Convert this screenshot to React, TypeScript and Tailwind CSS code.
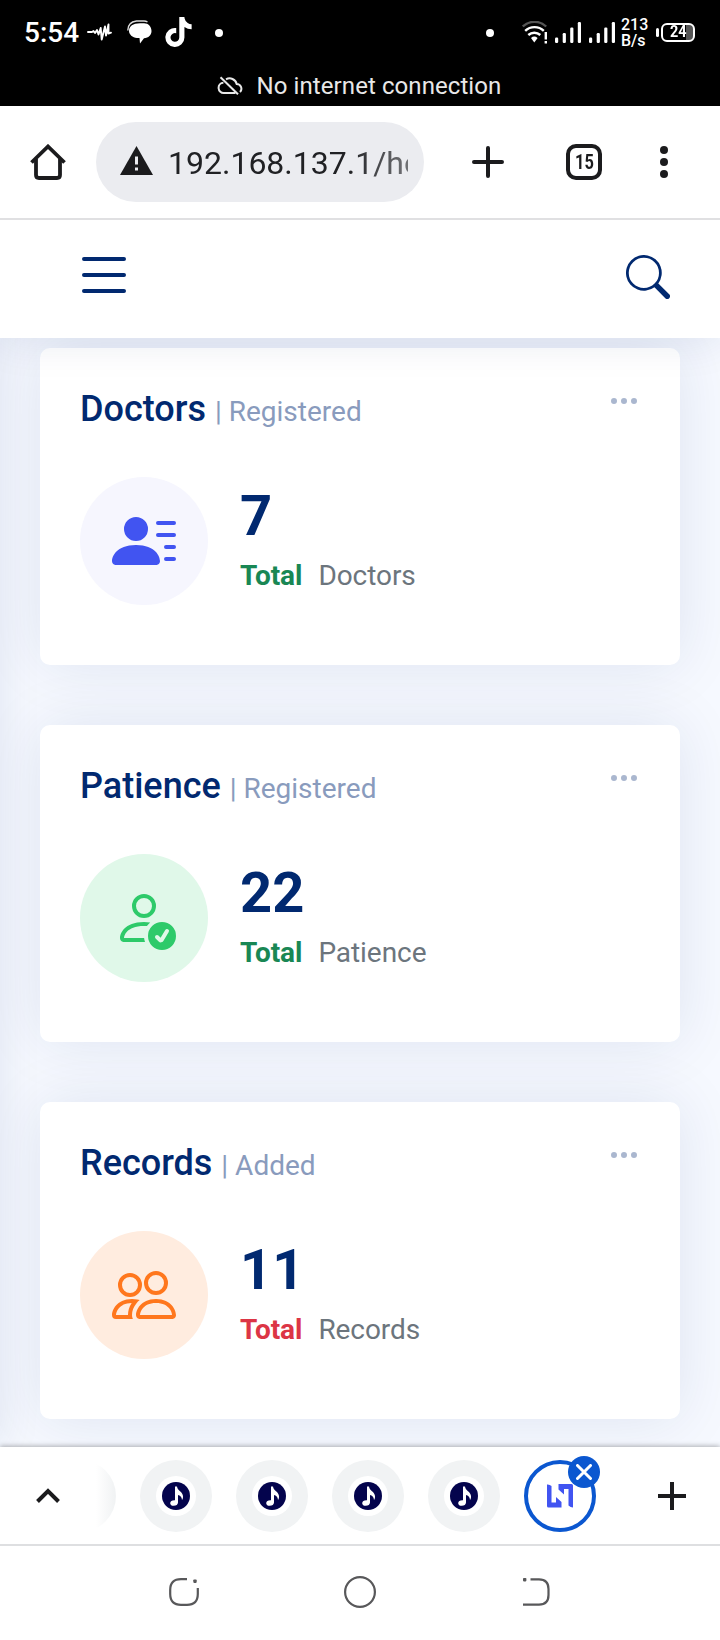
import type { ReactNode } from "react";
import {
  BsList,
  BsPeople,
  BsPersonCheck,
  BsPersonLinesFill,
  BsSearch,
  BsThreeDots,
} from "react-icons/bs";
import { FaTiktok } from "react-icons/fa6";

function SignalBars() {
  return (
    <svg width="26" height="21" viewBox="0 0 26 21" fill="#fff">
      <rect x="0" y="15.5" width="3.2" height="5.5" rx="1.2" />
      <rect x="7.7" y="11" width="3.2" height="10" rx="1.2" />
      <rect x="15.2" y="5.5" width="3.2" height="15.5" rx="1.2" />
      <rect x="22.8" y="0" width="3.2" height="21" rx="1.2" />
    </svg>
  );
}

function StatusBar() {
  return (
    <div className="h-[106px] bg-black text-white">
      <div className="flex h-16 items-center pl-[24px] pr-[25px]">
        <span className="w-[63px] pt-[2px] text-[28px] font-medium leading-8">5:54</span>
        <svg width="25" height="18" viewBox="0 0 25 18" fill="none" stroke="#fff" strokeWidth="1.900" strokeLinejoin="round" strokeLinecap="round">
          <path d="M1 9h4l1.500-1 1.500 2 2-3 1.500 4.500 2.200-6.500 1 11.500L18 3.500l1 9L21.500 1.500v9l2.500-.8" />
        </svg>
        <svg className="ml-[15px]" width="25" height="24" viewBox="0 0 25 24">
          <path d="M13 3.200h4c4.500 0 7.500 3.500 7.500 7.800 0 4-3 7-7.500 7.200L13 23.500 12.500 18H10c-4.500-.5-8-3.500-8-7 0-4.800 4-7.800 11-7.800Z" fill="#fff" />
          <path d="M.8 10.500Q.8 2 9.500 1H17q2 0 3.500 1" fill="none" stroke="#ddd" strokeWidth="1.400" />
        </svg>
        <FaTiktok className="ml-[12px] h-[30px] w-[29px]" />
        <span className="ml-[22px] mt-px size-2 rounded-full bg-white" />
        <span className="ml-auto mt-px size-2 rounded-full bg-white" />
        <svg className="ml-[28px]" width="26" height="23" viewBox="0 0 26 23" fill="none" stroke="#fff" strokeWidth="2.400">
          <path d="M.8 5.500a17 17 0 0 1 23.400 0" stroke="#555" />
          <path d="M3.200 9.800a13.500 13.500 0 0 1 18.600 0" />
          <path d="M6.300 14a9 9 0 0 1 12 0" />
          <path d="M9 17a5 5 0 0 1 6.600 0L12.300 21.500z" fill="#fff" stroke="none" />
          <path d="M23.800 11v7.500M23.800 20v2.500" />
        </svg>
        <span className="ml-[7px]"><SignalBars /></span>
        <span className="ml-[8px]"><SignalBars /></span>
        <div className="ml-[6px] mt-[2px] w-[28px] text-[16px] font-medium">
          <div className="leading-[16px]">213</div>
          <div className="leading-[16px]">B/s</div>
        </div>
        <span className="ml-[7px] h-[9px] w-[3px] rounded-sm bg-white" />
        <span className="ml-[2px] flex h-[19px] w-[34px] items-center justify-center rounded-[6px] border-2 border-white bg-[linear-gradient(90deg,#000_78%,#555_78%)] text-[16px] font-bold leading-none">
          <span className="scale-x-90">24</span>
        </span>
      </div>
      <div className="flex h-11 items-center justify-center pr-[2px]">
        <svg className="mr-[14px]" width="26" height="20" viewBox="0 0 26 20" fill="none" stroke="#e8e8e8" strokeWidth="2">
          <path d="M9 3.300A7.300 7.300 0 0 1 19.700 8a4.700 4.700 0 0 1 3.300 8M18.500 17H7a5 5 0 0 1-.6-10.200" />
          <path d="m3.500 1.200 17.500 17" />
        </svg>
        <span className="text-[24px] leading-7 tracking-[0.08px] text-[#e8e8e8]">No internet connection</span>
      </div>
    </div>
  );
}

function BrowserToolbar() {
  return (
    <div className="flex h-[114px] items-center border-b-2 border-[#e0e0e2] bg-white">
      <svg className="ml-[30px]" width="36" height="36" viewBox="0 0 36 36" fill="none" stroke="#1b1b1d" strokeWidth="3.800">
        <path d="M1.500 18.500 18 2.500l16.500 16" />
        <path d="M6 15v16q0 3 3 3h18q3 0 3-3V15" />
      </svg>
      <div className="ml-[30px] flex h-20 w-[328px] items-center rounded-full bg-[#ebecf0] pl-[24px]">
        <svg className="-mt-[3px]" width="33" height="29" viewBox="0 0 33 29">
          <path d="M16.500 0 33 29H0Z" fill="#1b1b1d" />
          <path d="M15 10.500h3v8h-3zM15 21.500h3v3h-3z" fill="#ebecf0" />
        </svg>
        <div className="ml-[15px] w-[240px] overflow-hidden whitespace-nowrap pt-[2px] text-[32px] leading-10 text-[#202124] [mask-image:linear-gradient(90deg,#000_75%,#0009)]">
          192.168.137.1/ho
        </div>
      </div>
      <svg className="ml-[48px]" width="32" height="32" viewBox="0 0 32 32" stroke="#1b1b1d" strokeWidth="4" strokeLinecap="round">
        <path d="M16 2v28M2 16h28" />
      </svg>
      <div className="ml-[62px] flex size-9 items-center justify-center rounded-[10px] border-4 border-[#1b1b1d] text-[20px] font-bold leading-none text-[#1b1b1d]">
        <span className="scale-x-[0.82]">15</span>
      </div>
      <div className="ml-[58px] flex w-2 flex-col gap-1">
        <span className="size-2 rounded-full bg-[#1b1b1d]" />
        <span className="size-2 rounded-full bg-[#1b1b1d]" />
        <span className="size-2 rounded-full bg-[#1b1b1d]" />
      </div>
    </div>
  );
}

type CardProps = {
  title: string;
  note: string;
  value: string;
  label: string;
  totalClass: string;
  iconClass: string;
  icon: ReactNode;
};

function StatCard({ title, note, value, label, totalClass, iconClass, icon }: CardProps) {
  return (
    <section className="h-[317px] rounded-[10px] bg-white px-10 pt-[37px] shadow-[0_0_60px_rgba(1,41,112,0.1)]">
      <div className="flex h-[45px] items-start justify-between">
        <h5 className="pt-[3px] text-[36px] font-medium leading-[43px] text-[#012970]">
          {title} <span className="text-[28px] font-normal text-[#899bbd]">| {note}</span>
        </h5>
        <BsThreeDots className="size-8 text-[#aab7cf]" />
      </div>
      <div className="mt-[47px] flex">
        <div className={`flex size-32 shrink-0 items-center justify-center rounded-full text-[64px] ${iconClass}`}>
          {icon}
        </div>
        <div className="pl-8 pt-[6px]">
          <div className="text-[56px] font-bold leading-[67px] text-[#012970]">{value}</div>
          <div className="mt-[5px] flex gap-4 text-[28px] leading-[42px] tracking-[-0.06px]">
            <span className={`font-bold ${totalClass}`}>Total</span>
            <span className="text-[#6c757d]">{label}</span>
          </div>
        </div>
      </div>
    </section>
  );
}

function Page() {
  return (
    <div className="relative h-[1227px] overflow-hidden bg-[#f6f9ff]">
      <header className="relative z-10 flex h-[118px] items-center justify-between bg-white pl-[72px] pr-[50px] text-[#012970] shadow-[0_4px_40px_rgba(1,41,112,0.1)]">
        <BsList className="mb-[8px] size-16" />
        <BsSearch className="mb-[4px] size-11" />
      </header>
      <div className="absolute -left-[600px] top-0 h-full w-[600px] shadow-[0_0_40px_rgba(1,41,112,0.1)]" />
      <main className="flex flex-col gap-[60px] px-10 pt-[10px]">
        <StatCard title="Doctors" note="Registered" value="7" label="Doctors" totalClass="text-[#198754]" iconClass="bg-[#f6f6fe] text-[#4154f1]" icon={<BsPersonLinesFill />} />
        <StatCard title="Patience" note="Registered" value="22" label="Patience" totalClass="text-[#198754]" iconClass="bg-[#e0f8e9] text-[#2eca6a]" icon={<BsPersonCheck />} />
        <StatCard title="Records" note="Added" value="11" label="Records" totalClass="text-[#dc3545]" iconClass="bg-[#ffecdf] text-[#ff771d]" icon={<BsPeople />} />
      </main>
    </div>
  );
}

function MusicTab() {
  return (
    <div className="flex w-24 justify-center">
      <div className="flex size-[72px] items-center justify-center rounded-full bg-[#f1f3f4]">
        <svg width="40" height="40" viewBox="0 0 40 40">
          <circle cx="20" cy="20" r="20" fill="#fff" />
          <circle cx="20" cy="20" r="14" fill="#04044d" />
          <path d="M19 10.500h2c.5 4.500 5.500 4.800 6 9.500.2 1.700-.2 3-1 4-.1-3-2-4.500-4-5v7.500c0 2-1.800 3.300-4.300 3.300-2 0-3.500-1-3.500-2.600 0-2 2-3.200 4.800-3z" fill="#fff" />
        </svg>
      </div>
    </div>
  );
}

function TabStrip() {
  return (
    <div className="relative z-20 flex h-[99px] items-center border-b-2 border-[#dedfe1] bg-white shadow-[0_-1px_5px_rgba(0,0,0,0.3)]">
      <div className="flex w-24 justify-center">
        <svg width="24" height="16" viewBox="0 0 24 16" fill="none" stroke="#1b1b1d" strokeWidth="4">
          <path d="m1.500 13.500 10.500-10.500 10.500 10.500" />
        </svg>
      </div>
      <div className="h-[72px] w-8 overflow-hidden">
        <div className="-ml-[52px] size-[72px] rounded-full bg-[linear-gradient(90deg,#fff_72%,#f1f3f4_98%)]" />
      </div>
      <MusicTab />
      <MusicTab />
      <MusicTab />
      <MusicTab />
      <div className="flex w-24 justify-center">
        <div className="relative flex size-[72px] items-center justify-center rounded-full border-4 border-[#0b57d0]">
          <svg width="28" height="26" viewBox="0 0 28 26" fill="#4154f1">
            <path d="M1 1.500Q3.500 1.200 5.500 3v16.500H10V14l5.500 5v5.500H2.500Q1 24.500 1 23z" />
            <path d="M27 24.500Q24.500 24.500 22.500 22.500V6H18v5.500L12.500 6.500V1h13Q27 1 27 2.500z" />
          </svg>
          <span className="absolute -right-[8px] -top-[8px] flex size-8 items-center justify-center rounded-full bg-[#0b57d0]">
            <svg width="16" height="16" viewBox="0 0 16 16" stroke="#fff" strokeWidth="3" strokeLinecap="round">
              <path d="m1.500 1.500 13 13M14.500 1.500l-13 13" />
            </svg>
          </span>
        </div>
      </div>
      <svg className="ml-[50px]" width="28" height="28" viewBox="0 0 28 28" stroke="#1b1b1d" strokeWidth="4">
        <path d="M14 0v28M0 14h28" />
      </svg>
    </div>
  );
}

function SystemNav() {
  return (
    <div className="relative z-30 flex h-[94px] items-center bg-white pb-[2px]">
      <svg className="ml-[169px]" width="30" height="28" viewBox="0 0 30 28" fill="none" stroke="#58585a" strokeWidth="2.200">
        <path d="M18 1.200h-6Q1.200 1.200 1.200 12v4Q1.200 26.800 12 26.800h6Q28.800 26.800 28.800 16v-6" />
        <rect x="24.300" y="1.500" width="3.400" height="3.400" rx=".8" fill="#58585a" stroke="none" />
      </svg>
      <svg className="ml-[145px]" width="32" height="32" viewBox="0 0 32 32" fill="none" stroke="#58585a" strokeWidth="2.200">
        <circle cx="16" cy="16" r="14.900" />
      </svg>
      <svg className="ml-[146px]" width="28" height="30" viewBox="0 0 28 30" fill="none" stroke="#58585a" strokeWidth="2.200">
        <path d="M8.500 2.400H17Q26.500 2.400 26.500 12v6Q26.500 27.600 17 27.600H1" />
        <rect x="1" y="1" width="3.400" height="3.400" rx=".8" fill="#58585a" stroke="none" />
      </svg>
    </div>
  );
}

export default function App() {
  return (
    <div className="h-[1640px] w-[720px] overflow-hidden bg-white font-[Roboto,sans-serif]">
      <StatusBar />
      <BrowserToolbar />
      <Page />
      <TabStrip />
      <SystemNav />
    </div>
  );
}
